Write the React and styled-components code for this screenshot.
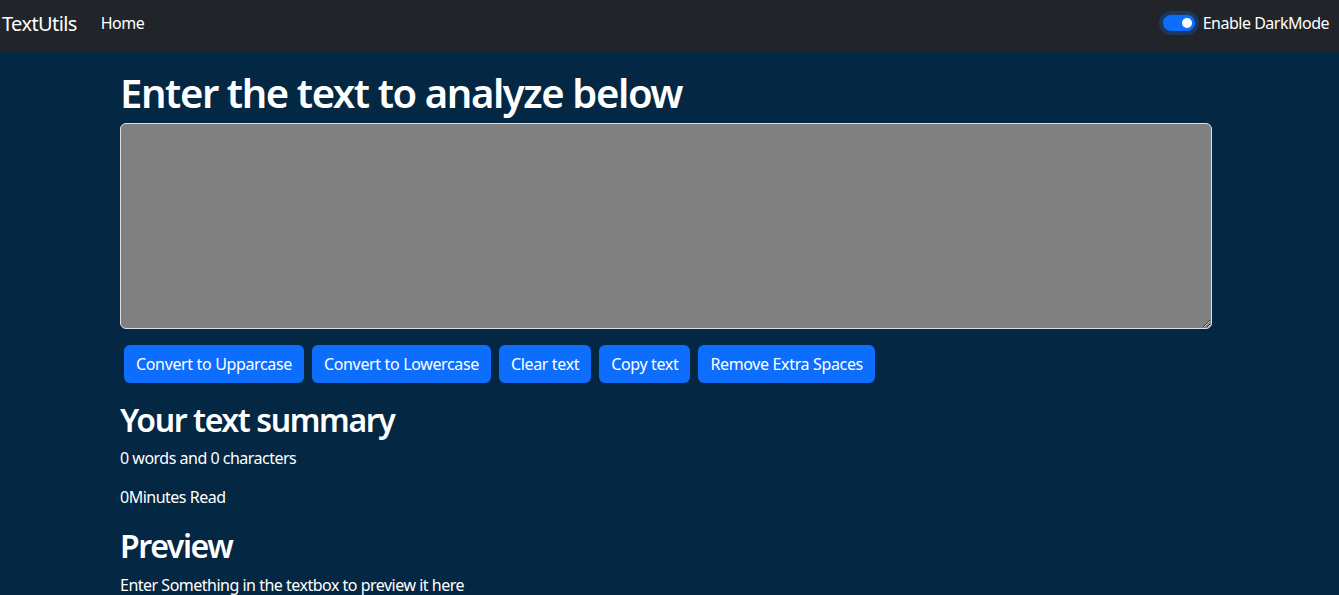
import React, { useState } from "react";
import styled, { createGlobalStyle } from "styled-components";

const GlobalStyle = createGlobalStyle`
  html, body {
    margin: 0;
    padding: 0;
    background: #042743;
    color: #fff;
    font-family: "Noto Sans", "Open Sans", sans-serif;
    letter-spacing: -0.5px;
    overflow: hidden;
  }
  * { box-sizing: border-box; }
`;

const Nav = styled.nav`
  height: 51px;
  background: #212529;
  display: flex;
  align-items: center;
  padding: 0 10px 5px 2px;
`;

const Brand = styled.a`
  font-size: 20px;
  letter-spacing: -0.6px;
  color: #fff;
  margin-right: 16px;
  text-decoration: none;
`;

const NavLink = styled.a`
  font-size: 16px;
  color: #fff;
  padding: 0 8px;
  text-decoration: none;
`;

const Spacer = styled.div`
  flex: 1;
`;

const SwitchRow = styled.label`
  display: flex;
  align-items: center;
  gap: 8px;
  font-size: 16px;
  color: #fff;
`;

const Switch = styled.span`
  position: relative;
  width: 32px;
  height: 16px;
  border-radius: 8px;
  background: ${p => (p.$on ? "#0d6efd" : "#fff")};
  box-shadow: 0 0 0 4px rgba(13, 110, 253, 0.25);
  &::after {
    content: "";
    position: absolute;
    top: 3px;
    left: ${p => (p.$on ? "19px" : "3px")};
    width: 10px;
    height: 10px;
    border-radius: 50%;
    background: #fff;
  }
`;

const Container = styled.main`
  width: 1092px;
  margin-left: 120px;
  padding-top: 18px;
`;

const Heading = styled.h1`
  font-size: 40px;
  font-weight: 600;
  letter-spacing: -1.4px;
  line-height: 1.2;
  margin: 0 0 6px;
`;

const TextArea = styled.textarea`
  display: block;
  width: 100%;
  height: 206px;
  background: grey;
  color: #fff;
  border: 1px solid #dee2e6;
  border-radius: 6px;
  padding: 6px 12px;
  font: inherit;
  margin-bottom: 16px;
`;

const ButtonRow = styled.div`
  display: flex;
  gap: 8px;
  padding-left: 4px;
`;

const Button = styled.button`
  background: #0d6efd;
  color: #fff;
  border: none;
  border-radius: 6px;
  height: 38px;
  padding: 0 12px;
  font-family: inherit;
  font-size: 16px;
  letter-spacing: -0.35px;
  cursor: pointer;
`;

const SubHeading = styled.h2`
  font-size: 32px;
  font-weight: 600;
  letter-spacing: -1.4px;
  line-height: 1.2;
  margin: 18px 0 7px;
`;

const Text = styled.p`
  font-size: 16px;
  line-height: 24px;
  margin: 0 0 15px;
`;

const App = () => {
  const [text, setText] = useState("");
  const words = text.split(/\s+/).filter(w => w.length).length;
  return (
    <>
      <GlobalStyle />
      <Nav>
        <Brand href="#">TextUtils</Brand>
        <NavLink href="#">Home</NavLink>
        <Spacer />
        <SwitchRow>
          <Switch $on />
          Enable DarkMode
        </SwitchRow>
      </Nav>
      <Container>
        <Heading>Enter the text to analyze below</Heading>
        <TextArea value={text} onChange={e => setText(e.target.value)} />
        <ButtonRow>
          <Button>Convert to Upparcase</Button>
          <Button>Convert to Lowercase</Button>
          <Button>Clear text</Button>
          <Button>Copy text</Button>
          <Button>Remove Extra Spaces</Button>
        </ButtonRow>
        <SubHeading>Your text summary</SubHeading>
        <Text>{words} words and {text.length} characters</Text>
        <Text>{0.008 * words}Minutes Read</Text>
        <SubHeading>Preview</SubHeading>
        <Text>{text.length > 0 ? text : "Enter Something in the textbox to preview it here"}</Text>
      </Container>
    </>
  );
};

export default App;
